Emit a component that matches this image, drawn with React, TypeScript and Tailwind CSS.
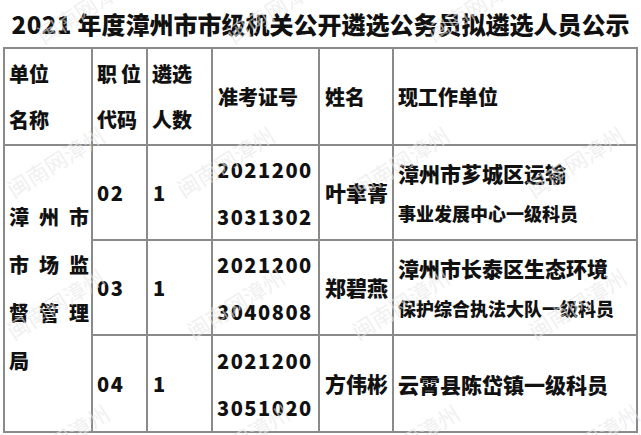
import React from "react";

const marks = [
  "left-[30px] top-[-8px]",
  "left-[220px] top-[-8px]",
  "left-[420px] top-[-10px]",
  "left-[0px] top-[146px]",
  "left-[170px] top-[146px]",
  "left-[345px] top-[146px]",
  "left-[520px] top-[146px]",
  "left-[0px] top-[288px]",
  "left-[180px] top-[288px]",
  "left-[345px] top-[288px]",
  "left-[522px] top-[288px]",
  "left-[5px] top-[424px]",
  "left-[185px] top-[424px]",
  "left-[355px] top-[424px]",
  "left-[535px] top-[424px]",
];

const rows = [
  { code: "02", exam: ["2021200", "3031302"], name: "叶聿菁", unit: ["漳州市芗城区运输", "事业发展中心一级科员"] },
  { code: "03", exam: ["2021200", "3040808"], name: "郑碧燕", unit: ["漳州市长泰区生态环境", "保护综合执法大队一级科员"] },
  { code: "04", exam: ["2021200", "3051020"], name: "方伟彬", unit: ["云霄县陈岱镇一级科员"] },
];

const cell = "bg-white flex flex-col justify-center pl-[4px] whitespace-nowrap";

function Spread({ text }: { text: string }) {
  return (
    <div className="flex justify-between w-[80px] leading-[48px]">
      {text.split("").map((c, i) => (
        <span key={i}>{c}</span>
      ))}
    </div>
  );
}

export default function App() {
  return (
    <div
      className="relative w-[641px] h-[435px] overflow-hidden bg-white text-[#111]"
      style={{ fontFamily: '"Noto Sans CJK SC", "Noto Sans", sans-serif' }}
    >
      {/* Title */}
      <div className="h-[47px] flex items-center justify-center text-[24px] font-black whitespace-nowrap">
        <span className="tracking-[0.5px]">2021</span>
        <span>&nbsp;年度漳州市市级机关公开遴选公务员拟遴选人员公示</span>
      </div>

      {/* Table */}
      <div className="ml-[3px] w-[635px] grid grid-cols-[86px_53px_63px_105px_72px_242px] grid-rows-[95px_93px_93px_95px] gap-[2px] p-[2px] bg-[#8a8a8a] font-black text-[20px]">
        <div className={cell + " pl-[3px]"}>
          <div className="leading-[46px]">单位</div>
          <div className="leading-[46px]">名称</div>
        </div>
        <div className={cell}>
          <div className="leading-[46px] tracking-[4px]">职位</div>
          <div className="leading-[46px]">代码</div>
        </div>
        <div className={cell}>
          <div className="leading-[46px]">遴选</div>
          <div className="leading-[46px]">人数</div>
        </div>
        <div className={cell + " pl-[5px]"}>准考证号</div>
        <div className={cell + " pl-[5px]"}>姓名</div>
        <div className={cell}>现工作单位</div>

        <div className={cell + " pl-[3px] row-span-3"}>
          <Spread text="漳州市" />
          <Spread text="市场监" />
          <Spread text="督管理" />
          <div className="leading-[48px]">局</div>
        </div>
        {rows.map((r) => (
          <React.Fragment key={r.code}>
            <div className={cell + " tracking-[1.5px]"}>{r.code}</div>
            <div className={cell + " pl-[5px]"}>1</div>
            <div className={cell + " pl-[4px] tracking-[1.5px]"}>
              {r.exam.map((e) => (
                <div key={e} className="leading-[47px]">
                  {e}
                </div>
              ))}
            </div>
            <div className={cell + " pl-[5px] text-[21px]"}>{r.name}</div>
            <div className={cell + " pl-[4px]"}>
              <div className="text-[21px] leading-[40px]">{r.unit[0]}</div>
              {r.unit[1] && <div className="text-[18px] leading-[40px]">{r.unit[1]}</div>}
            </div>
          </React.Fragment>
        ))}
      </div>

      {/* Watermarks */}
      {marks.map((m) => (
        <span
          key={m}
          className={
            "pointer-events-none absolute w-[110px] text-[22px] leading-[30px] text-[#e6e6e6]/60 -rotate-[32deg] whitespace-nowrap " +
            m
          }
        >
          闽南网漳州
        </span>
      ))}
    </div>
  );
}
